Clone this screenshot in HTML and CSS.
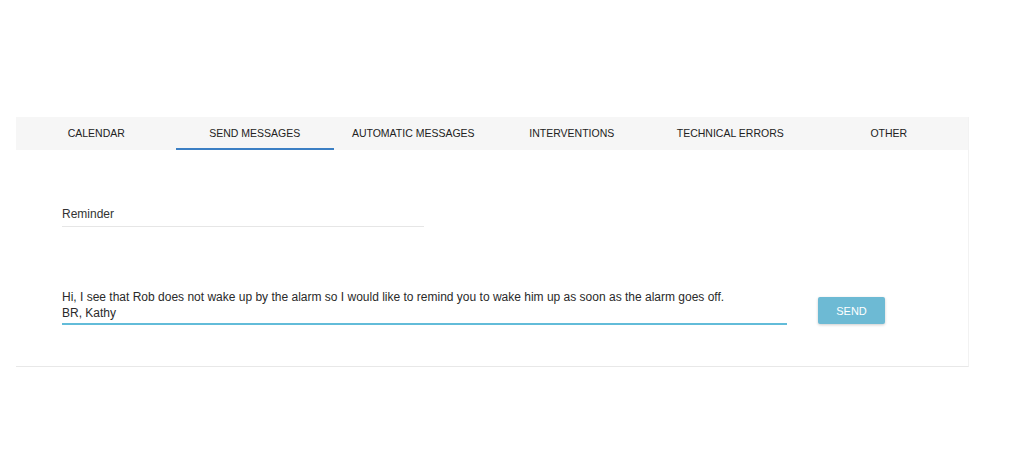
FILE: index.html
```html
<!DOCTYPE html>
<html lang="en">
<head>
  <meta charset="UTF-8">
  <meta name="viewport" content="width=device-width, initial-scale=1.0">
  <title>Send Messages</title>
  <link rel="stylesheet" href="styles.css">
</head>
<body>
  <div class="panel">
    <nav class="tabs">
      <a class="tab" href="#">CALENDAR</a>
      <a class="tab active" href="#">SEND MESSAGES</a>
      <a class="tab" href="#">AUTOMATIC MESSAGES</a>
      <a class="tab" href="#">INTERVENTIONS</a>
      <a class="tab" href="#">TECHNICAL ERRORS</a>
      <a class="tab" href="#">OTHER</a>
    </nav>

    <form class="message-form">
      <input class="subject" type="text" value="Reminder">

      <div class="message-row">
        <textarea class="message" rows="2">Hi, I see that Rob does not wake up by the alarm so I would like to remind you to wake him up as soon as the alarm goes off.
BR, Kathy</textarea>
        <button type="button" class="send">SEND</button>
      </div>
    </form>
  </div>
</body>
</html>
```

FILE: styles.css
```css
* {
  margin: 0;
  padding: 0;
  box-sizing: border-box;
  font-family: 'Liberation Sans', Arial, sans-serif;
}

body {
  background: #ffffff;
  color: #333333;
}

.panel {
  width: 953px;
  margin: 117px 0 0 16px;
  border-right: 1px solid #f2f2f2;
  border-bottom: 1px solid #e8e8e8;
}

.tabs {
  display: flex;
  height: 33px;
  background: #f6f6f6;
  padding-left: 1px;
}

.tab {
  flex: 1;
  display: flex;
  align-items: center;
  justify-content: center;
  font-size: 10.5px;
  color: #222;
  text-decoration: none;
  border-bottom: 2px solid transparent;
}

.tab.active {
  border-bottom-color: #3b7fc4;
}

.message-form {
  display: flex;
  flex-direction: column;
  padding: 50px 0 41px 46px;
}

.subject {
  width: 362px;
  height: 27px;
  border: none;
  border-bottom: 1px solid #e6e6e6;
  font-size: 12px;
  color: #333;
  outline: none;
  padding-top: 2px;
}

.message-row {
  display: flex;
  align-items: flex-end;
  margin-top: 62px;
}

.message {
  width: 725px;
  height: 36px;
  border: none;
  border-bottom: 2px solid #62bcd9;
  font-size: 12px;
  line-height: 16px;
  color: #2a2a2a;
  resize: none;
  outline: none;
  overflow: hidden;
}

.send {
  width: 67px;
  height: 27px;
  margin: 0 0 1px 31px;
  border: none;
  border-radius: 2px;
  background: #6dbad4;
  color: #ffffff;
  font-size: 11px;
  box-shadow: 0 1px 3px rgba(0, 0, 0, 0.2);
  cursor: pointer;
}
```
